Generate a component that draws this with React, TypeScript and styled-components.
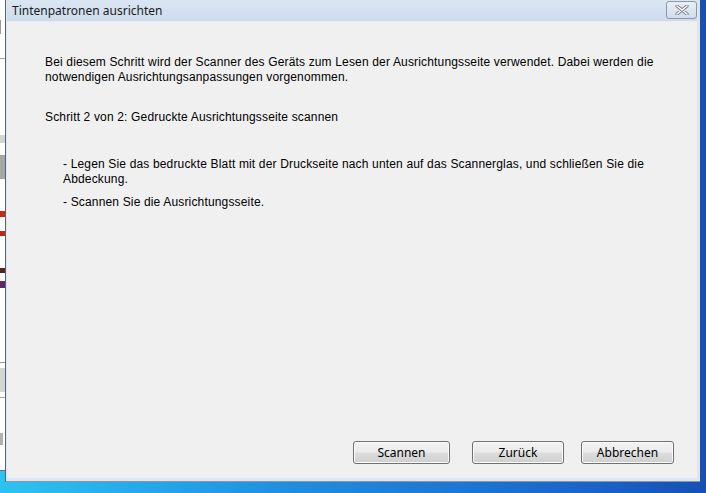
import styled, { createGlobalStyle } from 'styled-components'

const GlobalStyle = createGlobalStyle`
    html, body {
        margin: 0;
        padding: 0;
        overflow: hidden;
    }
`

const Desktop = styled.div`
    width: 706px;
    height: 493px;
    display: flex;
    align-items: flex-start;
    background: linear-gradient(to right, #2cc3f0 0%, #1f8fe0 40%, #1a62c8 85%, #1650b4 100%);
    font-family: "Liberation Sans", Arial, sans-serif;
`

const BackWindow = styled.div`
    width: 5px;
    height: 470px;
    background: #ffffff;
    display: flex;
    flex-direction: column;
    overflow: hidden;
    border-bottom: 1px solid #6e6e6e;
`

const Frag = styled.div<{ $top: number; $h: number; $color: string; $w?: number }>`
    margin-top: ${p => p.$top}px;
    height: ${p => p.$h}px;
    width: ${p => p.$w ?? 5}px;
    background: ${p => p.$color};
    flex-shrink: 0;
`

const Dialog = styled.div`
    width: 695px;
    height: 482px;
    display: flex;
    flex-direction: column;
    background: #dce6f2;
    border-left: 1px solid #56657a;
    border-bottom: 1px solid #8b97a6;
    box-sizing: border-box;
    padding: 0 3px 3px 1px;
`

const TitleBar = styled.div`
    height: 21px;
    display: flex;
    align-items: center;
    justify-content: space-between;
    background: linear-gradient(to bottom, #dbe6f3 0%, #cddbec 100%);
    padding-left: 5px;
    flex-shrink: 0;
`

const Title = styled.div`
    font-family: "Noto Sans", "Open Sans", sans-serif;
    font-size: 12px;
    color: #1b1b1b;
    margin-top: -1px;
`

const CloseButton = styled.div`
    width: 29px;
    height: 16px;
    margin-top: -2px;
    border: 1px solid #8a98a8;
    border-radius: 3px;
    background: linear-gradient(to bottom, #e9eff6 0%, #d2dcea 100%);
    display: flex;
    align-items: center;
    justify-content: center;
`

const Content = styled.div`
    flex: 1;
    background: #f0f0f0;
    border-top: 1px solid #e6edf5;
    display: flex;
    flex-direction: column;
    padding: 33px 23px 14px 38px;
    font-size: 12px;
    letter-spacing: 0.16px;
    line-height: 15px;
    color: #000;
`

const Para = styled.p<{ $gap?: number; $indent?: number }>`
    margin: ${p => p.$gap ?? 0}px 0 0 ${p => p.$indent ?? 0}px;
`

const Footer = styled.div`
    margin-top: auto;
    display: flex;
    justify-content: flex-end;
`

const Button = styled.div<{ $w: number; $ml?: number }>`
    width: ${p => p.$w}px;
    height: 23px;
    margin-left: ${p => p.$ml ?? 0}px;
    box-sizing: border-box;
    border: 1px solid #707070;
    border-radius: 3px;
    background: linear-gradient(to bottom, #f2f2f2 0%, #ebebeb 48%, #dddddd 52%, #cfcfcf 100%);
    box-shadow: inset 0 0 0 1px #fbfbfb;
    display: flex;
    align-items: center;
    justify-content: center;
    font-family: "Noto Sans", "Open Sans", sans-serif;
    font-size: 12px;
    letter-spacing: 0;
    color: #000;
`

export default function App() {
    return (
        <>
            <GlobalStyle />
            <Desktop>
                <BackWindow>
                    <Frag $top={20} $h={14} $color="#9a9a9a" $w={1} />
                    <Frag $top={24} $h={1} $color="#a0a0a0" />
                    <Frag $top={76} $h={8} $color="#d4d4d4" />
                    <Frag $top={12} $h={24} $color="#a6a6a6" />
                    <Frag $top={32} $h={6} $color="#c42a1a" />
                    <Frag $top={14} $h={5} $color="#b8281c" />
                    <Frag $top={32} $h={5} $color="#5a2020" />
                    <Frag $top={8} $h={7} $color="#5b2a6a" />
                    <Frag $top={74} $h={1} $color="#9a9a9a" />
                    <Frag $top={5} $h={24} $color="#d6d6d6" />
                    <Frag $top={5} $h={1} $color="#a0a0a0" />
                    <Frag $top={35} $h={12} $color="#b0b0b0" $w={3} />
                </BackWindow>
                <Dialog>
                    <TitleBar>
                        <Title>Tintenpatronen ausrichten</Title>
                        <CloseButton>
                            <svg width="14" height="10" viewBox="0 0 14 10">
                                <path d="M2 1 L12 9 M12 1 L2 9" stroke="#6f7a86" strokeWidth="3.2" strokeLinecap="round" />
                                <path d="M2 1 L12 9 M12 1 L2 9" stroke="#ffffff" strokeWidth="1.6" strokeLinecap="round" />
                            </svg>
                        </CloseButton>
                    </TitleBar>
                    <Content>
                        <Para>
                            Bei diesem Schritt wird der Scanner des Geräts zum Lesen der Ausrichtungsseite verwendet. Dabei werden die notwendigen Ausrichtungsanpassungen vorgenommen.
                        </Para>
                        <Para $gap={25}>Schritt 2 von 2: Gedruckte Ausrichtungsseite scannen</Para>
                        <Para $gap={32} $indent={18}>
                            - Legen Sie das bedruckte Blatt mit der Druckseite nach unten auf das Scannerglas, und schließen Sie die Abdeckung.
                        </Para>
                        <Para $gap={8} $indent={18}>- Scannen Sie die Ausrichtungsseite.</Para>
                        <Footer>
                            <Button $w={97}>Scannen</Button>
                            <Button $w={92} $ml={22}>Zurück</Button>
                            <Button $w={93} $ml={17}>Abbrechen</Button>
                        </Footer>
                    </Content>
                </Dialog>
            </Desktop>
        </>
    )
}
